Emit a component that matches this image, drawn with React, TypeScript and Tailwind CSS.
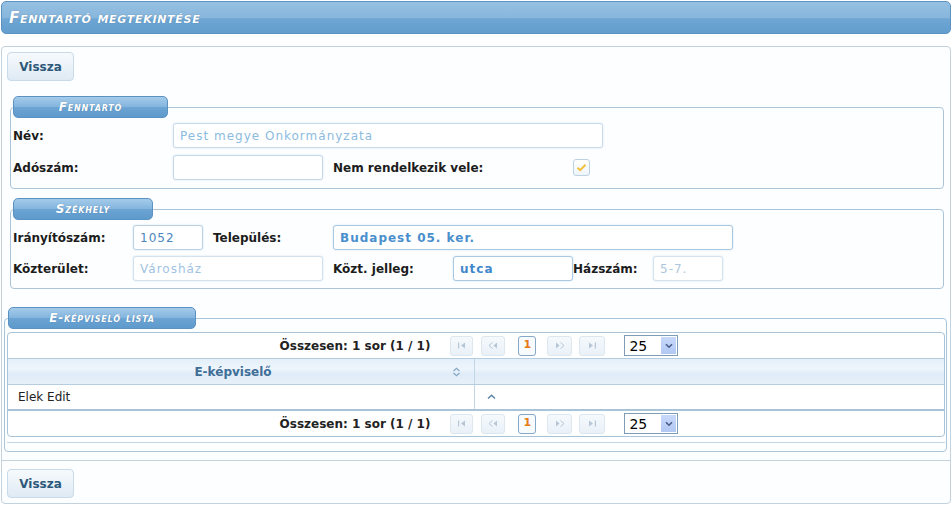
import React from "react"

const inputCls =
  "h-[25px] rounded-[3px] border bg-white pl-[6px] text-[12px] tracking-[1px] outline-none shadow-[0_0_2px_rgba(150,190,225,0.45)]"

const Legend = ({ children, className }: { children: React.ReactNode; className: string }) => (
  <legend
    className={`h-[22px] rounded-[5px] border border-[#5b92c2] bg-[linear-gradient(to_bottom,#a4cbea_0%,#84b5de_48%,#6ca4d3_52%,#5e9acc_100%)] text-left ${className}`}
  >
    <span className="block text-center text-[12px] leading-[20px] font-bold italic text-white [font-variant:small-caps] tracking-[0.8px] [text-shadow:0_0_1px_rgba(40,80,120,0.5)]">
      {children}
    </span>
  </legend>
)

const BackButton = () => (
  <button className="h-[29px] w-[67px] rounded-[4px] border border-[#c9dae8] bg-[linear-gradient(to_bottom,#f6fafd,#dfeaf4)] text-[12px] font-bold text-[#2c5879]">
    Vissza
  </button>
)

const NavIcon = ({ kind }: { kind: "first" | "prev" | "next" | "last" }) => (
  <svg width="10" height="7" viewBox="0 0 10 7" className="text-[#b5c6d6]">
    {kind === "first" && (
      <>
        <rect x="1" y="0.5" width="1.2" height="6" fill="currentColor" />
        <path d="M8 0.5 L4 3.5 L8 6.5 Z" fill="currentColor" />
      </>
    )}
    {kind === "prev" && (
      <>
        <path d="M4.5 0.5 L1 3.5 L4.5 6.5" stroke="currentColor" fill="none" strokeWidth="1" />
        <path d="M9 0.5 L5.5 3.5 L9 6.5 Z" fill="currentColor" />
      </>
    )}
    {kind === "next" && (
      <>
        <path d="M1 0.5 L4.5 3.5 L1 6.5 Z" fill="currentColor" />
        <path d="M5.5 0.5 L9 3.5 L5.5 6.5" stroke="currentColor" fill="none" strokeWidth="1" />
      </>
    )}
    {kind === "last" && (
      <>
        <path d="M2 0.5 L6 3.5 L2 6.5 Z" fill="currentColor" />
        <rect x="7.8" y="0.5" width="1.2" height="6" fill="currentColor" />
      </>
    )}
  </svg>
)

const NavButton = ({ kind, w, className }: { kind: "first" | "prev" | "next" | "last"; w: string; className: string }) => (
  <span
    className={`flex h-[20px] ${w} items-center justify-center rounded-[3px] border border-[#dde7f0] bg-[linear-gradient(to_bottom,#f5f9fc,#e9f1f8)] ${className}`}
  >
    <NavIcon kind={kind} />
  </span>
)

const Paginator = () => (
  <div className="flex h-[25px] items-center justify-center pl-[6px]">
    <span className="text-[12px] font-bold text-[#222]">Összesen: 1 sor (1 / 1)</span>
    <NavButton kind="first" w="w-[23px]" className="ml-[20px]" />
    <NavButton kind="prev" w="w-[24px]" className="ml-[8px]" />
    <span className="ml-[13px] flex h-[20px] w-[18px] items-center justify-center rounded-[3px] border border-[#86a8c8] bg-[#f7fbfe] text-[11px] font-bold text-[#e67a16]">
      1
    </span>
    <NavButton kind="next" w="w-[25px]" className="ml-[11px]" />
    <NavButton kind="last" w="w-[26px]" className="ml-[7px]" />
    <span className="ml-[19px] flex h-[21px] w-[54px] items-center justify-between border border-[#7f9db9] bg-white pl-[4px] pr-px">
      <span className="text-[14px] leading-none text-black">25</span>
      <span className="flex h-[17px] w-[15px] items-center justify-center bg-[linear-gradient(to_bottom,#c8d8fa,#b1c8f3)]">
        <svg width="8" height="6" viewBox="0 0 8 6">
          <path d="M1 1.2 L4 4.2 L7 1.2" stroke="#4a5d8a" strokeWidth="1.6" fill="none" />
        </svg>
      </span>
    </span>
  </div>
)

export default function App() {
  return (
    <div className="h-[505px] w-[952px] overflow-hidden bg-white font-['DejaVu_Sans',sans-serif] text-[12px] text-[#1c1c1c]">
      {/* title bar */}
      <div className="ml-px mt-px flex h-[33px] w-[950px] items-center rounded-[5px] border border-[#5d93c2] bg-[linear-gradient(to_bottom,#95c0e2_0%,#88b6dc_50%,#6ea6d3_54%,#639ece_100%)] pl-[7px]">
        <h1 className="pt-[1px] text-[15px] font-bold italic tracking-[0.7px] text-white [font-variant:small-caps] [text-shadow:0_0_1px_rgba(40,80,120,0.6)]">
          Fenntartó megtekintése
        </h1>
      </div>

      {/* main panel */}
      <div className="ml-px mt-[12px] flex h-[458px] w-[950px] flex-col rounded-[4px] border border-[#c3d2dd] bg-[#fdfeff]">
        <div className="ml-[5px] mt-[5px]">
          <BackButton />
        </div>

        {/* Fenntartó */}
        <fieldset className="ml-[8px] mr-[6px] mt-[15px] rounded-[4px] border border-[#aac5da] pb-[8px]">
          <Legend className="ml-[2px] w-[155px]">Fenntartó</Legend>
          <div className="flex flex-col gap-[7px] pl-[2px] pt-[5px]">
            <div className="flex items-center">
              <span className="w-[160px] font-bold">Név:</span>
              <input
                readOnly
                value="Pest megye Önkormányzata"
                className={`${inputCls} w-[430px] border-[#cadcea] text-[#8cbbe0]`}
              />
            </div>
            <div className="flex items-center">
              <span className="w-[160px] font-bold">Adószám:</span>
              <input readOnly value="" className={`${inputCls} w-[150px] border-[#c6d8e7]`} />
              <span className="ml-[10px] w-[240px] font-bold">Nem rendelkezik vele:</span>
              <span className="flex h-[17px] w-[17px] items-center justify-center rounded-[3px] border border-[#bcd2e4] bg-[linear-gradient(to_bottom,#ffffff,#eef5fb)]">
                <svg width="11" height="9" viewBox="0 0 11 9">
                  <path d="M1.5 4.8 L4.2 7.2 L9.5 1.8" stroke="#f1bf3c" strokeWidth="2" fill="none" />
                </svg>
              </span>
            </div>
          </div>
        </fieldset>

        {/* Székhely */}
        <fieldset className="ml-[8px] mr-[6px] mt-[9px] rounded-[4px] border border-[#aac5da] pb-[7px]">
          <Legend className="ml-[2px] w-[140px]">Székhely</Legend>
          <div className="flex flex-col gap-[6px] pl-[2px] pt-[5px]">
            <div className="flex items-center">
              <span className="w-[120px] font-bold">Irányítószám:</span>
              <input readOnly value="1052" className={`${inputCls} w-[70px] border-[#b9d1e5] text-[#4a87bf]`} />
              <span className="ml-[10px] w-[120px] font-bold">Település:</span>
              <input
                readOnly
                value="Budapest 05. ker."
                className={`${inputCls} w-[400px] border-[#a9c8e2] font-semibold text-[#4a8fcd]`}
              />
            </div>
            <div className="flex items-center">
              <span className="w-[120px] font-bold">Közterület:</span>
              <input readOnly value="Városház" className={`${inputCls} w-[190px] border-[#d2e1ec] text-[#9fc3e2]`} />
              <span className="ml-[10px] w-[120px] font-bold">Közt. jelleg:</span>
              <input
                readOnly
                value="utca"
                className={`${inputCls} w-[120px] border-[#a9c8e2] font-semibold text-[#3f88cb]`}
              />
              <span className="w-[80px] font-bold">Házszám:</span>
              <input readOnly value="5-7." className={`${inputCls} w-[70px] border-[#d4e2ec] text-[#adc6db]`} />
            </div>
          </div>
        </fieldset>

        {/* E-képviselő lista */}
        <fieldset className="ml-[2px] mr-[3px] mt-[18px] rounded-[4px] border border-[#aac5da] pb-[8px] pl-[2px] pr-px">
          <Legend className="ml-px w-[188px]">E-képviselő lista</Legend>
          <div className="mt-[3px] overflow-hidden rounded-[4px] border border-[#a9c4d9] bg-white">
            <Paginator />
            <div className="flex h-[27px] border-y border-[#b4cde0] bg-[linear-gradient(to_bottom,#e4eff9_0%,#eef5fc_40%,#dfebf7_60%,#e6f0f9_100%)]">
              <div className="flex w-[467px] items-center border-r border-[#c3d6e5]">
                <span className="flex-1 pl-[6px] text-center font-bold text-[#3e6e97]">E-képviselő</span>
                <svg width="9" height="10" viewBox="0 0 9 10" className="mr-[13px]">
                  <path d="M1.5 4 L4.5 1.2 L7.5 4" stroke="#86a7c4" strokeWidth="1.2" fill="none" />
                  <path d="M1.5 6 L4.5 8.8 L7.5 6" stroke="#86a7c4" strokeWidth="1.2" fill="none" />
                </svg>
              </div>
              <div className="flex-1" />
            </div>
            <div className="flex h-[26px] border-b-2 border-[#a9c4d9]">
              <div className="flex w-[467px] items-center border-r border-[#c3d6e5] pl-[10px] text-[#222]">Elek Edit</div>
              <div className="flex flex-1 items-center pl-[12px]">
                <svg width="9" height="6" viewBox="0 0 9 6">
                  <path d="M1 4.5 L4.5 1.2 L8 4.5" stroke="#5b85ab" strokeWidth="1.5" fill="none" />
                </svg>
              </div>
            </div>
            <Paginator />
          </div>
          <div className="h-[6px] border-b border-[#c4d5e2]" />
        </fieldset>

        <div className="mt-[8px] border-t border-[#c4d2dc]" />
        <div className="ml-[5px] mt-[8px]">
          <BackButton />
        </div>
      </div>
    </div>
  )
}
